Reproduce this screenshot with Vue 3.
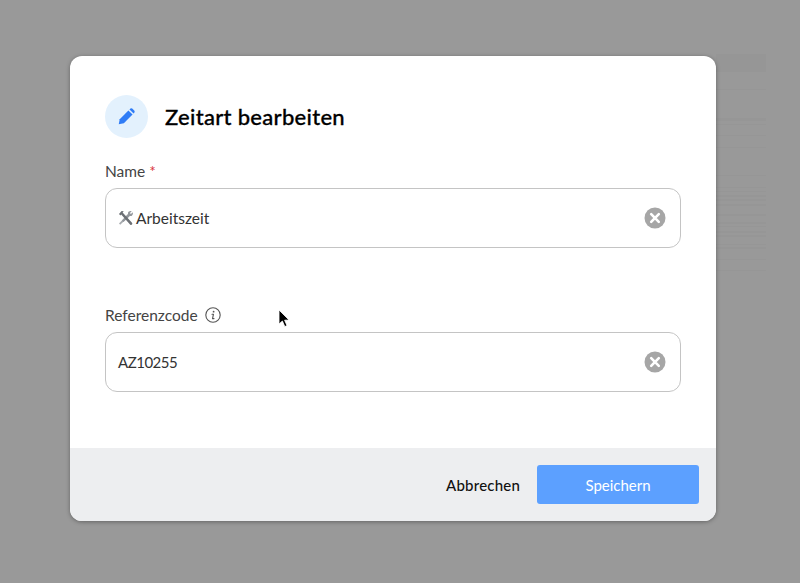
<template>
	<div class="backdrop">
		<div class="ghost">
			<i v-for="row in ghostRows" :key="row[0]" :style="{ top: row[0] + 'px', height: row[1] + 'px' }"></i>
		</div>

		<div class="modal">
			<div class="modal-body">
				<div class="modal-head">
					<span class="head-icon">
						<svg width="17" height="17" viewBox="0 0 18 18">
							<path d="M.8 17.2 L1.8 11.8 L11 2.6 L15.4 7 L6.2 16.2 Z" fill="#2f7cf6"/>
							<path d="M12.2 1.5 L13.2 .6 Q14.1 0 15 .6 L17.4 3 Q18 3.9 17.4 4.8 L16.5 5.8 Z" fill="#2f7cf6"/>
						</svg>
					</span>
					<h2 class="title">Zeitart bearbeiten</h2>
				</div>

				<div class="field name-field">
					<label class="field-label">Name <span class="required">*</span></label>
					<div class="input">
						<svg class="tools" width="16" height="16" viewBox="0 0 16 16">
							<path d="M2.2 14.8 L1 13.6 L9.6 4.6 L11.2 6.2 Z" fill="#a8acb0"/>
							<path d="M13.8 1.2 L11.9 3.1 L12.9 4.1 L14.8 2.2 Q15.6 4.6 13.9 5.7 Q12.9 6.2 11.9 5.9 L5.5 12 L4 10.5 L10 4 Q9.7 2.6 10.8 1.6 Q12.1 .5 13.8 1.2 Z" fill="#93979c"/>
							<path d="M1 4 L3.6 1 L5.8 1.2 L4.6 2.4 L13.8 12.6 Q14.8 13.8 14 14.6 Q13 15.4 12 14.4 L3.2 4.6 L2.4 5.6 Z" fill="#6c7075"/>
						</svg>
						<span class="value">Arbeitszeit</span>
						<span class="clear">
							<svg width="22" height="22" viewBox="0 0 22 22">
								<circle cx="11" cy="11" r="10.5" fill="#a6a6a6"/>
								<path d="M7.2 7.2 L14.8 14.8 M14.8 7.2 L7.2 14.8" stroke="#fff" stroke-width="2.6" stroke-linecap="round"/>
							</svg>
						</span>
					</div>
				</div>

				<div class="field ref-field">
					<label class="field-label">
						Referenzcode
						<svg class="info" width="16" height="16" viewBox="0 0 16 16" fill="none">
							<circle cx="8" cy="8" r="7.2" stroke="#555" stroke-width="1.1"/>
							<circle cx="8.6" cy="4.7" r=".9" fill="#555"/>
							<path d="M7 7.2 H8.5 L7.5 11.6 H9" stroke="#555" stroke-width="1.1" stroke-linecap="round" stroke-linejoin="round"/>
						</svg>
					</label>
					<div class="input">
						<span class="value code">AZ10255</span>
						<span class="clear">
							<svg width="22" height="22" viewBox="0 0 22 22">
								<circle cx="11" cy="11" r="10.5" fill="#a6a6a6"/>
								<path d="M7.2 7.2 L14.8 14.8 M14.8 7.2 L7.2 14.8" stroke="#fff" stroke-width="2.6" stroke-linecap="round"/>
							</svg>
						</span>
					</div>
				</div>
			</div>

			<div class="modal-foot">
				<button class="btn-cancel">Abbrechen</button>
				<button class="btn-save">Speichern</button>
			</div>
		</div>

		<svg class="cursor" width="12" height="20" viewBox="0 0 12 20">
			<path d="M1 1 L1 15 L4.4 12 L6.8 17.6 L9 16.6 L6.6 11.2 L11 11 Z" fill="#000" stroke="#fff" stroke-width=".8"/>
		</svg>
	</div>
</template>

<script setup>
// faint rows of the page behind the overlay, right of the modal
const ghostRows = [
	[0, 18], [35, 1], [64, 3], [70, 1], [81, 1], [93, 1], [121, 1], [133, 1],
	[137, 1], [141, 2], [145, 2], [150, 2], [160, 2], [168, 2], [172, 1], [177, 2],
	[181, 2], [190, 1], [193, 2], [205, 1], [216, 1],
]
</script>

<style>
html, body {
	margin: 0;
	background: #999;
}
</style>

<style scoped>
.backdrop {
	position: relative;
	box-sizing: border-box;
	width: 800px;
	height: 583px;
	padding: 56px 84px 0 70px;
	background: #999;
	font-family: Lato, "Liberation Sans", sans-serif;
	overflow: hidden;
}

.ghost {
	position: absolute;
	left: 716px;
	top: 54px;
	width: 50px;
	height: 230px;
}

.ghost i {
	position: absolute;
	left: 0;
	width: 100%;
	background: rgba(0, 0, 0, .015);
}

.modal {
	position: relative;
	display: flex;
	flex-direction: column;
	height: 465px;
	background: #fff;
	border-radius: 12px;
	box-shadow: 0 1px 4px rgba(0, 0, 0, .35);
	overflow: hidden;
}

.modal-body {
	flex: 1;
	padding: 39px 35px 0;
}

.modal-head {
	display: flex;
	align-items: center;
	gap: 17px;
}

.head-icon {
	display: flex;
	align-items: center;
	justify-content: center;
	width: 43px;
	height: 43px;
	border-radius: 50%;
	background: #e3f1fd;
}

.title {
	margin: 0;
	font-size: 22px;
	font-weight: 500;
	letter-spacing: .3px;
	color: #000;
	-webkit-text-stroke: .3px #000;
}

.name-field {
	margin-top: 23px;
}

.ref-field {
	margin-top: 57px;
}

.field-label {
	display: flex;
	align-items: center;
	gap: 4px;
	height: 20px;
	margin-bottom: 7px;
	font-size: 15.5px;
	color: #444;
}

.required {
	color: #d9363e;
}

.info {
	margin-left: 3px;
}

.input {
	display: flex;
	align-items: center;
	box-sizing: border-box;
	height: 60px;
	padding: 0 14px 0 12px;
	border: 1px solid #c4c4c4;
	border-radius: 12px;
}

.tools {
	margin-right: 2px;
}

.value {
	flex: 1;
	font-size: 15.5px;
	color: #333;
}

.code {
	font-size: 15px;
	letter-spacing: -.5px;
}

.clear {
	display: flex;
}

.modal-foot {
	display: flex;
	align-items: center;
	justify-content: flex-end;
	gap: 17px;
	height: 73px;
	padding: 0 17px;
	background: #edeef0;
}

button {
	font-family: inherit;
	font-size: 15px;
	border: 0;
	cursor: pointer;
}

.btn-cancel {
	padding: 0;
	background: none;
	color: #111;
	font-weight: 500;
	letter-spacing: .2px;
}

.btn-save {
	width: 162px;
	height: 39px;
	border-radius: 3px;
	background: #5ca0ff;
	color: #fff;
}

.cursor {
	position: absolute;
	left: 278px;
	top: 309px;
}
</style>
